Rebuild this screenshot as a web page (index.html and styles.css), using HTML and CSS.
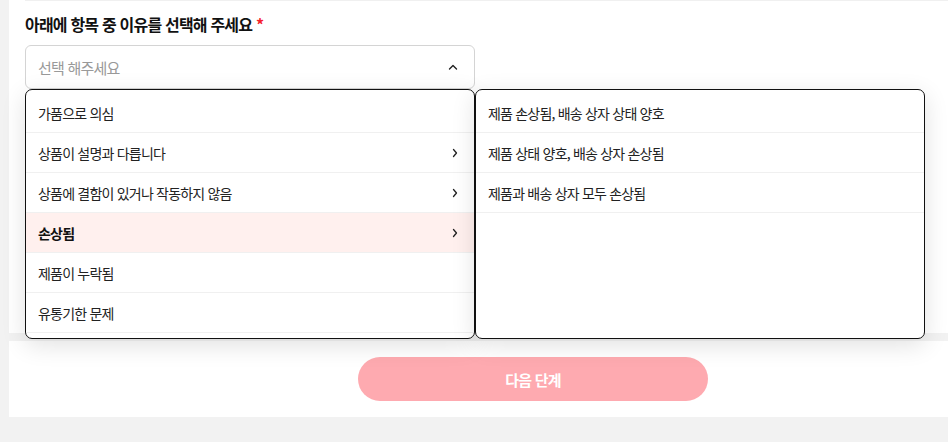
FILE: index.html
```html
<!DOCTYPE html>
<html lang="ko">
<head>
  <meta charset="UTF-8" />
  <meta name="viewport" content="width=device-width, initial-scale=1.0"/>
  <title>반품 사유 선택</title>
  <link rel="stylesheet" href="styles.css">
</head>
<body>
  <div class="page">
    <section class="card reason-card">
      <div class="top-line"></div>
      <h2 class="field-label">아래에 항목 중 이유를 선택해 주세요 <span class="required">*</span></h2>

      <div class="select-wrap">
        <div class="select-box">
          <span class="placeholder">선택 해주세요</span>
          <svg class="caret" width="10" height="6" viewBox="0 0 10 6"><polyline points="1.5,5 5,1.5 8.5,5" fill="none" stroke="#222" stroke-width="1.4" stroke-linecap="round" stroke-linejoin="round"/></svg>
        </div>

        <div class="menu">
          <ul class="menu-panel">
            <li class="menu-item">가품으로 의심</li>
            <li class="menu-item has-sub">상품이 설명과 다릅니다
              <svg class="arrow" width="6" height="10" viewBox="0 0 6 10"><polyline points="1.5,1.5 4.5,5 1.5,8.5" fill="none" stroke="#222" stroke-width="1.3" stroke-linecap="round" stroke-linejoin="round"/></svg>
            </li>
            <li class="menu-item has-sub">상품에 결함이 있거나 작동하지 않음
              <svg class="arrow" width="6" height="10" viewBox="0 0 6 10"><polyline points="1.5,1.5 4.5,5 1.5,8.5" fill="none" stroke="#222" stroke-width="1.3" stroke-linecap="round" stroke-linejoin="round"/></svg>
            </li>
            <li class="menu-item has-sub active">손상됨
              <svg class="arrow" width="6" height="10" viewBox="0 0 6 10"><polyline points="1.5,1.5 4.5,5 1.5,8.5" fill="none" stroke="#222" stroke-width="1.3" stroke-linecap="round" stroke-linejoin="round"/></svg>
            </li>
            <li class="menu-item">제품이 누락됨</li>
            <li class="menu-item">유통기한 문제</li>
          </ul>
          <ul class="menu-panel">
            <li class="menu-item">제품 손상됨, 배송 상자 상태 양호</li>
            <li class="menu-item">제품 상태 양호, 배송 상자 손상됨</li>
            <li class="menu-item">제품과 배송 상자 모두 손상됨</li>
          </ul>
        </div>
      </div>
    </section>

    <section class="card action-card">
      <button type="button" class="next-btn">다음 단계</button>
    </section>
  </div>
</body>
</html>
```

FILE: styles.css
```css
html, body {
  overflow: hidden;
}
body {
  font-family: "Noto Sans CJK KR", "Noto Sans", sans-serif;
  background-color: #f2f2f2;
  margin: 0;
  padding: 0;
  color: #222;
  letter-spacing: -0.05em;
}
.page {
  width: 1048px;
  padding-left: 9px;
}
.card {
  background-color: #ffffff;
}
.reason-card {
  height: 333px;
  padding: 0 16px;
  box-sizing: border-box;
}
.top-line {
  height: 1px;
  background-color: #f0f0f0;
}
.field-label {
  margin: 0;
  padding-top: 11px;
  font-size: 16px;
  font-weight: 700;
  line-height: 24px;
  color: #111;
}
.required {
  color: #f5222d;
}
.select-wrap {
  position: relative;
  width: 450px;
  margin-top: 9px;
}
.select-box {
  height: 44px;
  box-sizing: border-box;
  border: 1px solid #d4d4d4;
  border-radius: 6px;
  display: flex;
  align-items: center;
  justify-content: space-between;
  padding: 0 16px 0 12px;
}
.placeholder {
  font-size: 15px;
  color: #999;
}
.menu {
  position: absolute;
  top: 44px;
  left: 0;
  display: flex;
  z-index: 2;
}
.menu-panel {
  width: 450px;
  height: 250px;
  box-sizing: border-box;
  margin: 0;
  padding: 3px 0 0;
  list-style: none;
  background-color: #ffffff;
  border: 1px solid #111;
  border-radius: 7px;
  box-shadow: 0 6px 24px rgba(0, 0, 0, 0.12);
  overflow: hidden;
}
.menu-item {
  height: 40px;
  box-sizing: border-box;
  border-bottom: 1px solid #f0f0f0;
  display: flex;
  align-items: center;
  justify-content: space-between;
  padding: 0 16px 0 12px;
  font-size: 14px;
  color: #222;
}
.menu-item.active {
  background-color: #fff0ee;
  font-weight: 700;
  color: #111;
}
.action-card {
  margin-top: 8px;
  height: 76px;
  display: flex;
  align-items: center;
  justify-content: center;
}
.next-btn {
  width: 350px;
  height: 44px;
  border: none;
  border-radius: 22px;
  background-color: #feaab0;
  color: #ffffff;
  font-family: inherit;
  font-size: 15px;
  font-weight: 700;
  letter-spacing: -0.05em;
  cursor: pointer;
}
```
